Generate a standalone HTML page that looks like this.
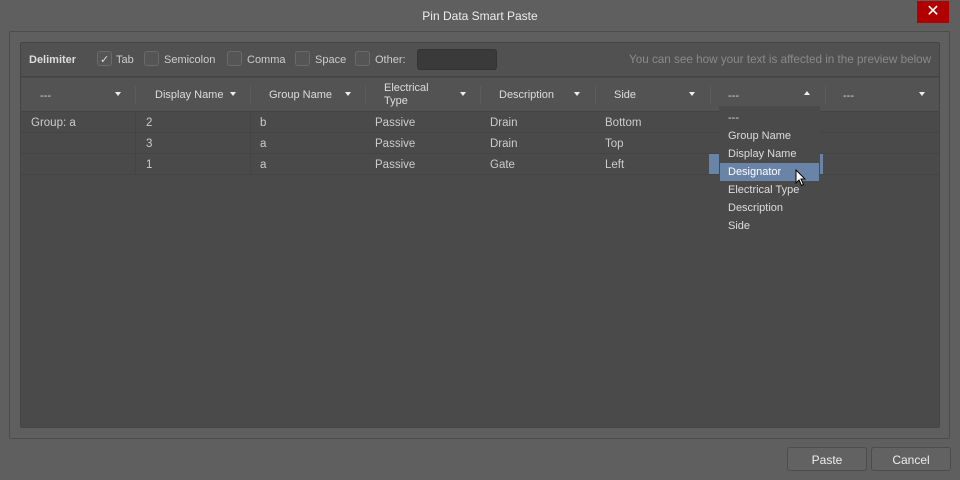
<!DOCTYPE html>
<html><head><style>
*{margin:0;padding:0;box-sizing:border-box}
body{width:960px;height:480px;background:#5f5f5f;font-family:"Liberation Sans",sans-serif;font-size:11px;color:#ddd;position:relative;overflow:hidden}
.a{position:absolute}
.t{white-space:nowrap}
.cb{position:absolute;top:51px;width:15px;height:15px;border:1px solid #6a6a6a;background:#555;border-radius:3px}
.arr{position:absolute;width:0;height:0;border-left:3.5px solid transparent;border-right:3.5px solid transparent;border-top:4px solid #eee}
.row{position:absolute;left:21px;width:918px;height:21px;border-bottom:1px solid #444}
.c{position:absolute;color:#ccc;font-size:11.5px}
.btn{position:absolute;top:447px;height:24px;border:1px solid #4c4c4c;border-radius:3px;background:#626262;color:#eee;text-align:center;line-height:24px;font-size:12px}
</style></head><body>
<div class="a t" style="left:0;width:960px;top:9px;text-align:center;font-size:12px;color:#eee">Pin Data Smart Paste</div>
<div class="a" style="left:917px;top:1px;width:32px;height:22px;background:#b00000;color:#fff;text-align:center;line-height:21px;font-size:16px">✕</div>
<div class="a" style="left:9px;top:31px;width:941px;height:408px;border:1px solid #4c4c4c;border-radius:2px"></div>
<div class="a" style="left:20px;top:42px;width:920px;height:386px;background:#4a4a4a;border:1px solid #444;border-radius:2px"></div>
<div class="a" style="left:21px;top:43px;width:918px;height:34px;background:#515151;border-bottom:1px solid #444"></div>
<div class="a t" style="left:29px;top:54px;font-weight:bold;color:#ddd">Delimiter</div>
<div class="cb" style="left:97px"></div><div class="a" style="left:100px;top:53px;color:#ddd;font-size:11px">✓</div>
<div class="a t" style="left:116px;top:54px;color:#ccc">Tab</div>
<div class="cb" style="left:144px"></div><div class="a t" style="left:164px;top:54px;color:#ccc">Semicolon</div>
<div class="cb" style="left:227px"></div><div class="a t" style="left:247px;top:54px;color:#ccc">Comma</div>
<div class="cb" style="left:295px"></div><div class="a t" style="left:315px;top:54px;color:#ccc">Space</div>
<div class="cb" style="left:355px"></div><div class="a t" style="left:375px;top:54px;color:#ccc">Other:</div>
<div class="a" style="left:417px;top:49px;width:80px;height:21px;background:#3a3a3a;border-radius:3px;border:1px solid #333"></div>
<div class="a t" style="left:629px;top:53px;color:#8a8a8a;font-size:11.7px">You can see how your text is affected in the preview below</div>
<div class="a" style="left:21px;top:78px;width:918px;height:34px;background:#535353;border-bottom:1px solid #444"></div>
<div class="a t" style="left:40px;top:90px">---</div><div class="arr" style="left:115px;top:92px"></div>
<div class="a t" style="left:155px;top:89px">Display Name</div><div class="arr" style="left:230px;top:92px"></div>
<div class="a t" style="left:269px;top:89px">Group Name</div><div class="arr" style="left:345px;top:92px"></div>
<div class="a t" style="left:384px;top:82px;line-height:13px">Electrical<br>Type</div><div class="arr" style="left:460px;top:92px"></div>
<div class="a t" style="left:499px;top:89px">Description</div><div class="arr" style="left:574px;top:92px"></div>
<div class="a t" style="left:614px;top:89px">Side</div><div class="arr" style="left:689px;top:92px"></div>
<div class="a t" style="left:728px;top:90px">---</div><div class="a" style="left:804px;top:91px;width:0;height:0;border-left:3.5px solid transparent;border-right:3.5px solid transparent;border-bottom:4px solid #eee"></div>
<div class="a t" style="left:843px;top:90px">---</div><div class="arr" style="left:919px;top:92px"></div>
<div class="a" style="left:135px;top:86px;width:1px;height:18px;background:#5c5c5c"></div>
<div class="a" style="left:250px;top:86px;width:1px;height:18px;background:#5c5c5c"></div>
<div class="a" style="left:365px;top:86px;width:1px;height:18px;background:#5c5c5c"></div>
<div class="a" style="left:480px;top:86px;width:1px;height:18px;background:#5c5c5c"></div>
<div class="a" style="left:595px;top:86px;width:1px;height:18px;background:#5c5c5c"></div>
<div class="a" style="left:710px;top:86px;width:1px;height:18px;background:#5c5c5c"></div>
<div class="a" style="left:825px;top:86px;width:1px;height:18px;background:#5c5c5c"></div>
<div class="row" style="top:112px"></div><div class="row" style="top:133px"></div><div class="row" style="top:154px"></div>
<div class="a" style="left:135px;top:112px;width:1px;height:63px;background:#444"></div>
<div class="a" style="left:250px;top:112px;width:1px;height:63px;background:#444"></div>
<div class="a t c" style="left:31px;top:117px">Group: a</div>
<div class="a t c" style="left:146px;top:117px">2</div><div class="a t c" style="left:260px;top:117px">b</div><div class="a t c" style="left:375px;top:117px">Passive</div><div class="a t c" style="left:490px;top:117px">Drain</div><div class="a t c" style="left:605px;top:117px">Bottom</div>
<div class="a t c" style="left:146px;top:138px">3</div><div class="a t c" style="left:260px;top:138px">a</div><div class="a t c" style="left:375px;top:138px">Passive</div><div class="a t c" style="left:490px;top:138px">Drain</div><div class="a t c" style="left:605px;top:138px">Top</div>
<div class="a t c" style="left:146px;top:159px">1</div><div class="a t c" style="left:260px;top:159px">a</div><div class="a t c" style="left:375px;top:159px">Passive</div><div class="a t c" style="left:490px;top:159px">Gate</div><div class="a t c" style="left:605px;top:159px">Left</div>
<div class="a" style="left:709px;top:154px;width:114px;height:20px;background:#6a84a8"></div>
<div class="a" style="left:719px;top:106px;width:101px;height:130px;background:#4a4a4a"></div>
<div class="a" style="left:720px;top:163px;width:99px;height:18px;background:#6a84a8"></div>
<div class="a t" style="left:728px;top:112px;color:#ddd">---</div>
<div class="a t" style="left:728px;top:130px;color:#ddd">Group Name</div>
<div class="a t" style="left:728px;top:148px;color:#ddd">Display Name</div>
<div class="a t" style="left:728px;top:166px;color:#fff">Designator</div>
<div class="a t" style="left:728px;top:184px;color:#ddd">Electrical Type</div>
<div class="a t" style="left:728px;top:202px;color:#ddd">Description</div>
<div class="a t" style="left:728px;top:220px;color:#ddd">Side</div>
<svg class="a" style="left:795px;top:169px" width="12" height="18"><path d="M1 1 L1 14 L4 11 L6.5 16.5 L8.5 15.5 L6 10 L10 10 Z" fill="#fff" stroke="#000" stroke-width="1"/></svg>
<div class="btn" style="left:787px;width:80px">Paste</div>
<div class="btn" style="left:871px;width:80px">Cancel</div>
</body></html>
